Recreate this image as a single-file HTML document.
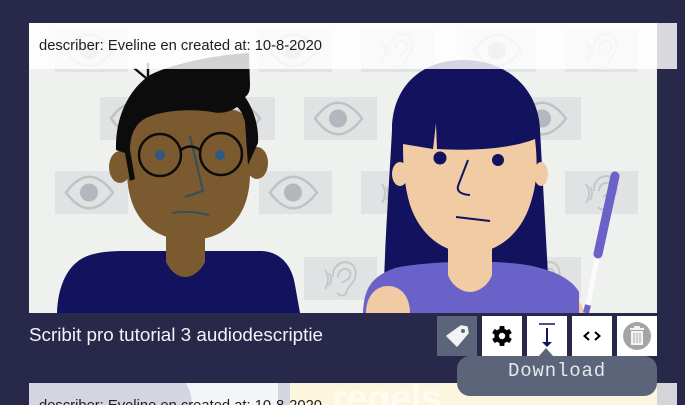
<!DOCTYPE html>
<html><head><meta charset="utf-8"><style>
html,body{margin:0;padding:0;background:#28284a;width:685px;height:405px;overflow:hidden}
svg{display:block}
text{font-family:"Liberation Sans",sans-serif}
</style></head><body>
<svg width="685" height="405" viewBox="0 0 685 405" xmlns="http://www.w3.org/2000/svg">
<defs>
<g id="e"><rect width="73" height="43" fill="#e0e2e3"/><path d="M11 21.5Q34 -10 58 21.5Q34 53 11 21.5Z" fill="none" stroke="#c0c3c6" stroke-width="2.500"/><circle cx="34" cy="21.5" r="9" fill="#b4b7be"/></g>
<g id="r"><rect width="73" height="43" fill="#e0e2e3"/><g fill="none" stroke="#c4c6c8" stroke-width="1.900"><path d="M25 16Q29 22 25 29M21 13Q27 22 21 32"/><path d="M29 20C28 10 36 5 42 5C50 6 53 13 51 21C49 27 44 29 43 34C42 39 36 40 33 36"/><path d="M34 20C34 14 39 11 43 12C48 14 47 20 44 22L38 26"/></g></g>
</defs>
<rect width="685" height="405" fill="#28284a"/>
<rect x="29" y="23" width="628" height="290" fill="#eff1ee"/>
<use href="#e" x="55" y="29"/><use href="#e" x="259" y="29"/><use href="#r" x="361" y="29"/><use href="#e" x="463" y="29"/><use href="#r" x="565" y="29"/>
<use href="#e" x="100" y="97"/><use href="#e" x="202" y="97"/><use href="#e" x="304" y="97"/><use href="#e" x="508" y="97"/>
<use href="#e" x="55" y="171"/><use href="#e" x="259" y="171"/><use href="#r" x="361" y="171"/><use href="#r" x="565" y="171"/>
<use href="#r" x="304" y="257"/><use href="#r" x="508" y="257"/>

<!-- man -->
<path d="M57 313C58 285 68 262 90 255C100 252 110 251 125 251H262C280 252 292 265 295 285L300 313Z" fill="#12125e"/>
<path d="M166 225H205V262C200 272 192 277 185 277C178 277 171 272 166 262Z" fill="#7a5a2e"/>
<ellipse cx="120" cy="167" rx="11" ry="16" fill="#7a5a2e"/>
<ellipse cx="257" cy="163" rx="11" ry="16" fill="#7a5a2e"/>
<path d="M130 130C130 112 155 108 190 108C215 108 235 105 248 118L250 170C251 215 228 240 189 240C150 240 127 215 127 170Z" fill="#7a5a2e"/>
<path d="M116 150C115 118 128 90 150 75C175 62 225 54 249 53L250 85C250 92 248 95 245 97C253 108 259 125 258 143L248 165L245 122C243 114 240 109 237 107C230 112 222 114 212 112C195 109 165 109 146 118C135 124 130 135 130 150L135 179L130 181L125 153Z" fill="#0c0c0c"/>
<path d="M134 68L146 78M148 63V78" stroke="#0c0c0c" stroke-width="2.400" fill="none"/>
<path d="M190 136L203 191L185 197" fill="none" stroke="#2f4f63" stroke-width="2"/>
<g fill="none" stroke="#0c0c0c" stroke-width="2.500"><circle cx="160" cy="155" r="21"/><circle cx="221" cy="154" r="21"/><path d="M181 150Q190 143 200 150"/></g>
<circle cx="160" cy="155" r="5" fill="#2c5a85"/><circle cx="220" cy="155" r="5" fill="#2c5a85"/>
<path d="M172 213Q190 210 209 215" fill="none" stroke="#2f4f63" stroke-width="1.800"/>

<!-- woman -->
<path d="M392 130C392 88 420 60 463 60C510 60 539 92 540 130L548 275L384 285C385 240 390 170 392 130Z" fill="#12125e"/>
<path d="M363 313C364 290 370 277 395 268C420 262 480 260 510 263C540 265 570 275 579 292V313Z" fill="#6a62c8"/>
<path d="M366 313C366 296 376 286 388 286C402 286 410 298 410 313Z" fill="#f0cba3"/>
<path d="M579 300L585 313H579Z" fill="#f0cba3"/>
<path d="M448 230H492V275C488 286 478 292 470 292C462 292 452 286 448 275Z" fill="#f0cba3"/>
<ellipse cx="400" cy="174" rx="8" ry="12" fill="#f0cba3"/><ellipse cx="541" cy="174" rx="7" ry="12" fill="#f0cba3"/>
<path d="M403 144L433 149L436 123L437 149C470 151 510 149 535 139C538 165 537 185 530 205C520 235 497 253 470 253C443 253 420 235 410 205C404 185 403 165 403 144Z" fill="#f0cba3"/>
<circle cx="440" cy="158" r="6.500" fill="#12125e"/><circle cx="498" cy="160" r="6" fill="#12125e"/>
<path d="M468 160L458 186Q456 194 470 195" fill="none" stroke="#12125e" stroke-width="2"/>
<path d="M456 217L490 221" stroke="#12125e" stroke-width="2"/>
<path d="M597 258L588 305" stroke="#fafafa" stroke-width="5"/>
<path d="M615 176L598 254" stroke="#6a62c8" stroke-width="9" stroke-linecap="round"/>
<path d="M588 305L586 313" stroke="#6a62c8" stroke-width="6"/>

<!-- bar -->
<rect x="29" y="23" width="648" height="46" fill="#fff" fill-opacity=".82"/>
<text x="39" y="50" font-size="15" fill="#1e1e1e" textLength="283" lengthAdjust="spacingAndGlyphs">describer: Eveline en created at: 10-8-2020</text>

<rect x="0" y="313" width="685" height="70" fill="#28284a"/>
<text x="29" y="341" font-size="18" fill="#f4f4f6" textLength="294" lengthAdjust="spacingAndGlyphs">Scribit pro tutorial 3 audiodescriptie</text>

<!-- second card -->
<rect x="29" y="383" width="648" height="22" fill="#d4d5e0"/>
<path d="M186 383C190 390 192 398 192 405H278V383Z" fill="#f4f5f7"/>
<rect x="290" y="383" width="367" height="22" fill="#fcf6df"/>
<rect x="657" y="383" width="20" height="22" fill="#d4d5da"/>
<text x="332" y="411" font-size="38" font-weight="bold" fill="#fff" fill-opacity=".6" textLength="110">regels</text>
<text x="39" y="410" font-size="15" fill="#1e1e1e" textLength="283" lengthAdjust="spacingAndGlyphs">describer: Eveline en created at: 10-8-2020</text>

<!-- buttons -->
<rect x="437" y="316" width="40" height="40" fill="#5b6478"/>
<rect x="482" y="316" width="40" height="40" fill="#fff"/>
<rect x="527" y="316" width="40" height="40" fill="#fff"/>
<rect x="572" y="316" width="40" height="40" fill="#fff"/>
<rect x="617" y="316" width="40" height="40" fill="#fff"/>
<!-- tag -->
<path d="M447 336L461 326L467 327L468 333L457 346Z" fill="#f1f2f3" stroke="#f1f2f3" stroke-width="1.500" stroke-linejoin="round"/>
<circle cx="463" cy="331" r="2" fill="#5b6478"/>
<!-- gear -->
<g fill="#000"><circle cx="502" cy="336" r="7.500"/>
<rect x="499.500" y="326" width="5" height="20" rx="1"/>
<rect x="499.500" y="326" width="5" height="20" rx="1" transform="rotate(60 502 336)"/>
<rect x="499.500" y="326" width="5" height="20" rx="1" transform="rotate(120 502 336)"/></g>
<circle cx="502" cy="336" r="3.200" fill="#fff"/>
<!-- download -->
<path d="M539 324H555" stroke="#12125e" stroke-width="1.500"/>
<path d="M547 328V344" stroke="#12125e" stroke-width="2"/>
<path d="M542 342H552L547 347Z" fill="#12125e"/>
<!-- code -->
<path d="M589 332L584.500 336L589 340M595 332L599.500 336L595 340" fill="none" stroke="#000" stroke-width="2"/>
<!-- trash -->
<circle cx="637" cy="336" r="14" fill="#a5a5a3"/>
<g fill="#f4f4f2"><rect x="630" y="328" width="14" height="2"/><rect x="634" y="326" width="6" height="2"/>
<path d="M631 331H643V345H631Z"/></g>
<path d="M634 333V343M637 333V343M640 333V343" stroke="#a5a5a3" stroke-width="1"/>

<!-- tooltip -->
<path d="M539 356L546 348L553 356Z" fill="#5b6478"/>
<rect x="457" y="356" width="200" height="40" rx="13" fill="#5b6478"/>
<text x="508" y="376" font-size="19" fill="#e6e8ee" letter-spacing=".85" style="font-family:'Liberation Mono',monospace">Download</text>
</svg>
</body></html>
